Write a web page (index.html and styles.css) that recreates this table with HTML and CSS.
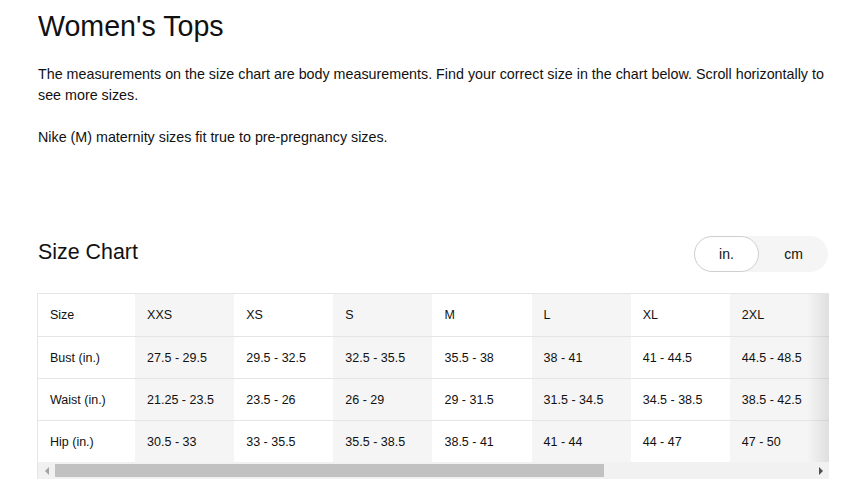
FILE: index.html
```html
<!DOCTYPE html>
<html lang="en">
<head>
<meta charset="utf-8">
<title>Women's Tops Size Chart</title>
<link rel="stylesheet" href="styles.css">
</head>
<body>
<main class="page">
  <h1 class="title">Women's Tops</h1>
  <p class="intro">The measurements on the size chart are body measurements. Find your correct size in the chart below. Scroll horizontally to see more sizes.</p>
  <p class="intro">Nike (M) maternity sizes fit true to pre-pregnancy sizes.</p>

  <section class="chart">
    <div class="chart-head">
      <h2 class="chart-title">Size Chart</h2>
      <div class="unit-toggle">
        <button class="unit unit-active">in.</button>
        <button class="unit">cm</button>
      </div>
    </div>

    <div class="table-frame">
      <div class="table-scroll">
        <table class="size-table">
          <colgroup>
            <col class="col-label">
            <col class="col-size"><col class="col-size"><col class="col-size"><col class="col-size">
            <col class="col-size"><col class="col-size"><col class="col-size">
          </colgroup>
          <tr>
            <td>Size</td><td>XXS</td><td>XS</td><td>S</td><td>M</td><td>L</td><td>XL</td><td>2XL</td>
          </tr>
          <tr>
            <td>Bust (in.)</td><td>27.5 - 29.5</td><td>29.5 - 32.5</td><td>32.5 - 35.5</td><td>35.5 - 38</td><td>38 - 41</td><td>41 - 44.5</td><td>44.5 - 48.5</td>
          </tr>
          <tr>
            <td>Waist (in.)</td><td>21.25 - 23.5</td><td>23.5 - 26</td><td>26 - 29</td><td>29 - 31.5</td><td>31.5 - 34.5</td><td>34.5 - 38.5</td><td>38.5 - 42.5</td>
          </tr>
          <tr>
            <td>Hip (in.)</td><td>30.5 - 33</td><td>33 - 35.5</td><td>35.5 - 38.5</td><td>38.5 - 41</td><td>41 - 44</td><td>44 - 47</td><td>47 - 50</td>
          </tr>
        </table>
      </div>
      <div class="shade"></div>
      <div class="scrollbar">
        <span class="sb-btn"><span class="arrow arrow-left"></span></span>
        <div class="sb-track"><div class="sb-thumb"></div></div>
        <span class="sb-btn"><span class="arrow arrow-right"></span></span>
      </div>
    </div>
  </section>
</main>
</body>
</html>
```

FILE: styles.css
```css
* { box-sizing: border-box; }

html, body {
  margin: 0;
  background: #fff;
}

body {
  font-family: "Liberation Sans", Arial, sans-serif;
  color: #111;
}

.page {
  padding: 0 20px 0 38px;
}

.title {
  margin: 10px 0 0;
  font-size: 28.6px;
  line-height: 32px;
  font-weight: 400;
}

.intro {
  margin: 22px -6px 0 0;
  font-size: 14.3px;
  line-height: 21px;
  color: #111;
}

.intro + .intro {
  margin-top: 21px;
}

.chart {
  margin-top: 88px;
}

.chart-head {
  display: flex;
  justify-content: space-between;
  align-items: baseline;
  padding-right: 2px;
}

.chart-title {
  margin: 0;
  font-size: 21.4px;
  font-weight: 400;
}

.unit-toggle {
  display: flex;
  width: 134px;
  height: 36px;
  background: #f5f5f5;
  border-radius: 18px;
}

.unit {
  font-family: inherit;
  font-size: 14px;
  color: #111;
  background: transparent;
  border: 1px solid transparent;
  border-radius: 18px;
  padding: 0;
  height: 36px;
  flex: 1;
}

.unit-active {
  flex: 0 0 65px;
  background: #fff;
  border-color: #cfcfcf;
}

.table-frame {
  position: relative;
  margin-top: 21px;
  margin-left: -1px;
  margin-right: 1px;
  border-top: 1px solid #e5e5e5;
  border-left: 1px solid #e5e5e5;
}

.table-scroll {
  overflow: hidden;
}

.size-table {
  border-collapse: separate;
  border-spacing: 0;
  table-layout: fixed;
  width: 100%;
  font-size: 12.5px;
  color: #111;
}

.col-label { width: 97px; }
.col-size { width: 99px; }

.size-table tr {
  height: 42px;
}

.size-table td {
  padding: 0 12px;
  white-space: nowrap;
  vertical-align: middle;
  background: #fff;
}

.size-table tr + tr td {
  border-top: 1px solid #e5e5e5;
}

.size-table td:nth-child(even) {
  background: #f5f5f5;
}

.shade {
  position: absolute;
  top: 0;
  right: 0;
  bottom: 17px;
  width: 22px;
  background: linear-gradient(to right, rgba(0, 0, 0, 0), rgba(0, 0, 0, 0.09));
  pointer-events: none;
}

.scrollbar {
  display: flex;
  height: 17px;
  background: #f1f1f1;
}

.sb-btn {
  flex: 0 0 17px;
  display: flex;
  align-items: center;
  justify-content: center;
}

.arrow {
  width: 0;
  height: 0;
  border-top: 4px solid transparent;
  border-bottom: 4px solid transparent;
}

.arrow-left {
  border-right: 4px solid #a3a3a3;
}

.arrow-right {
  border-left: 4px solid #505050;
}

.sb-track {
  flex: 1;
  display: flex;
  align-items: center;
}

.sb-thumb {
  width: 549px;
  height: 13px;
  background: #c1c1c1;
}
```
